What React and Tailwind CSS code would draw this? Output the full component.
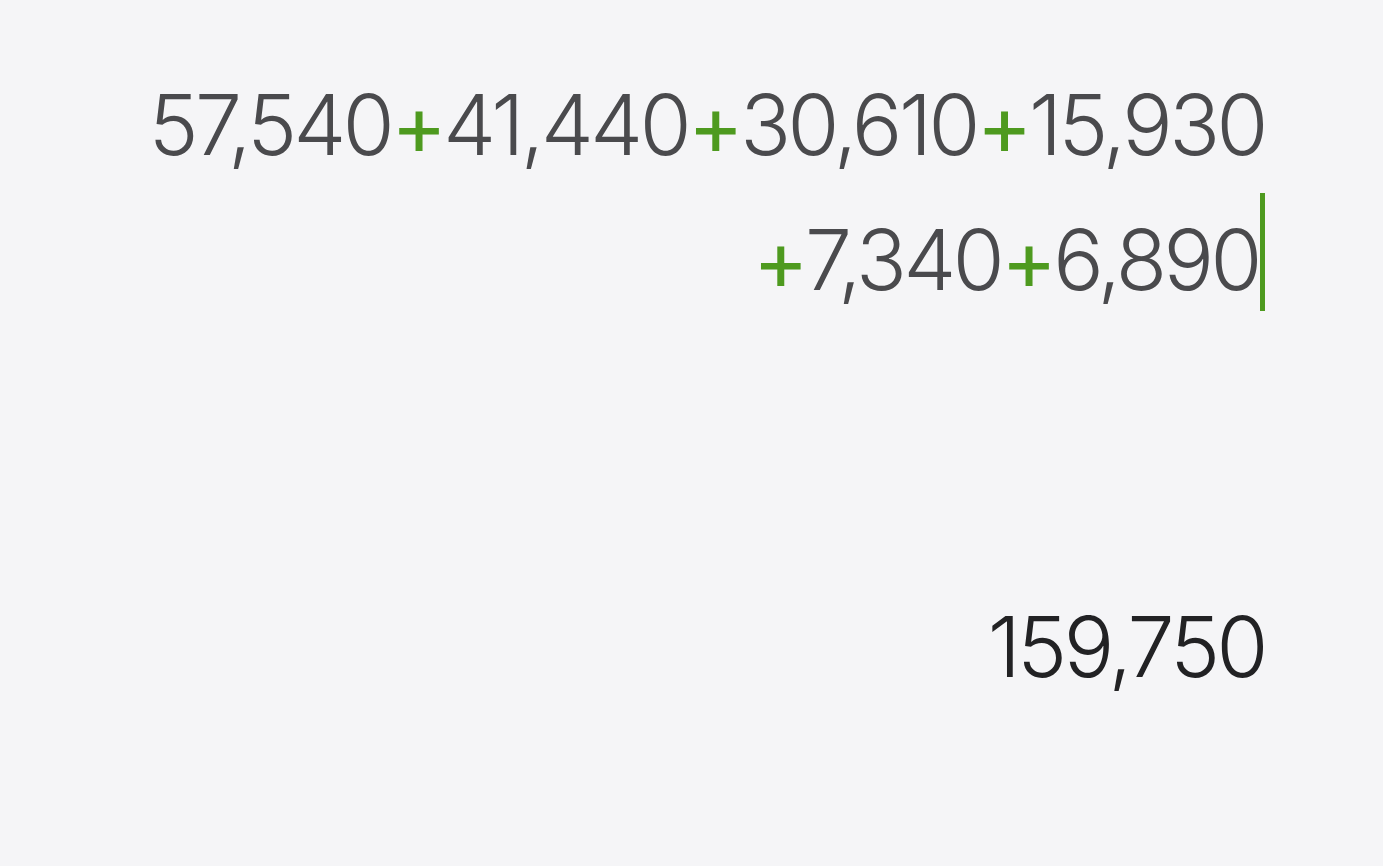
export default function App() {
  const parts1 = ['57,540', '41,440', '30,610', '15,930'];
  const parts2 = ['7,340', '6,890'];
  const plus = <span className="text-[#4e9a1f] font-normal">+</span>;

  return (
    <div
      className="h-[866px] w-full bg-[#f5f5f7] flex flex-col items-end pr-[118px] pt-[57px]"
      style={{ fontFamily: 'Inter, "Noto Sans", sans-serif' }}
    >
      <div className="text-[84px] font-light leading-[135px] text-[#4a4a4d] text-right tracking-[-3.5px]">
        {parts1.map((p, i) => (
          <span key={p}>
            {i > 0 && plus}
            {p}
          </span>
        ))}
      </div>
      <div className="text-[84px] font-light leading-[135px] text-[#4a4a4d] text-right tracking-[-3.5px] flex items-start">
        <span>
          {parts2.map((p) => (
            <span key={p}>
              {plus}
              {p}
            </span>
          ))}
        </span>
        <span className="inline-block w-[5px] h-[118px] mt-[1px] bg-[#4e9a1f] ml-[1px]" />
      </div>
      <div className="mt-[252px] text-[84px] font-light leading-[135px] text-[#222224] text-right tracking-[-3.5px]">
        159,750
      </div>
    </div>
  );
}
